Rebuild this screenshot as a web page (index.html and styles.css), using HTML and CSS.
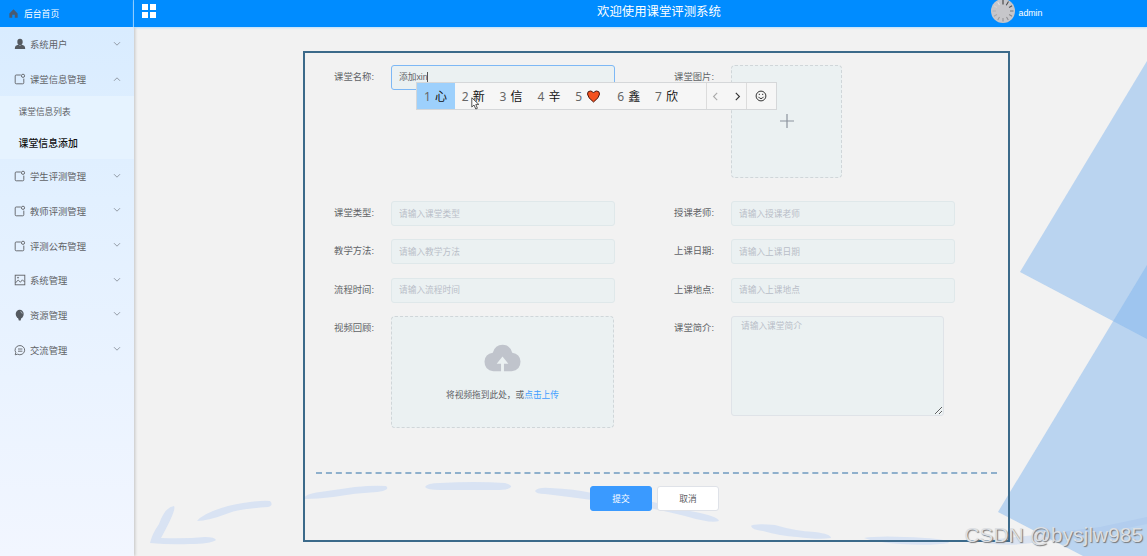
FILE: index.html
```
<!DOCTYPE html>
<html lang="zh-CN">
<head>
    <meta charset="UTF-8" />
    <title>欢迎使用课堂评测系统</title>
    <link rel="stylesheet" href="styles.css">
</head>
<body>

<!-- shared icons -->
<svg class="symbols" width="0" height="0">
    <symbol id="icon-down" viewBox="0 0 8 8"><path d="M1 2.2 L4 5.2 L7 2.2" /></symbol>
    <symbol id="icon-module" viewBox="0 0 12 12"><path d="M6.8 2 H2.2 Q1.2 2 1.2 3 V9.8 Q1.2 10.8 2.2 10.8 H8.8 Q9.8 10.8 9.8 9.8 V5.6" /><circle cx="9" cy="2.8" r="1.6" /></symbol>
</svg>

<div class="app">
    <aside class="sidebar">
        <div class="home">
            <svg class="home-icon" viewBox="0 0 10 10"><path d="M5 .4 L9.6 5 V9.6 H6.4 V6.4 H3.6 V9.6 H.4 V5 Z" /></svg>
            <span>后台首页</span>
        </div>
        <ul class="menu">
            <li class="menu-item">
                <svg class="icon solid" viewBox="0 0 12 12"><ellipse cx="6" cy="3.9" rx="2.7" ry="3.1" /><path d="M4.6 6.4 L6 7.8 L7.4 6.4 L10.2 7.8 Q11.2 8.6 11.2 11 H.8 Q.8 8.6 1.8 7.8 Z" /></svg>
                <span>系统用户</span>
                <svg class="arrow"><use href="#icon-down" /></svg>
            </li>
            <li class="menu-item">
                <svg class="icon"><use href="#icon-module" /></svg>
                <span>课堂信息管理</span>
                <svg class="arrow open"><use href="#icon-down" /></svg>
            </li>
            <li>
                <ul class="submenu">
                    <li>课堂信息列表</li>
                    <li class="active">课堂信息添加</li>
                </ul>
            </li>
            <li class="menu-item">
                <svg class="icon"><use href="#icon-module" /></svg>
                <span>学生评测管理</span>
                <svg class="arrow"><use href="#icon-down" /></svg>
            </li>
            <li class="menu-item">
                <svg class="icon"><use href="#icon-module" /></svg>
                <span>教师评测管理</span>
                <svg class="arrow"><use href="#icon-down" /></svg>
            </li>
            <li class="menu-item">
                <svg class="icon"><use href="#icon-module" /></svg>
                <span>评测公布管理</span>
                <svg class="arrow"><use href="#icon-down" /></svg>
            </li>
            <li class="menu-item">
                <svg class="icon" viewBox="0 0 12 12"><rect x="1.2" y="1.2" width="9.6" height="9.6" /><path d="M1.4 9 L4.2 6 L6.4 8.2 L8.4 5.8 L10.6 8" /><circle cx="4" cy="3.7" r=".5" /></svg>
                <span>系统管理</span>
                <svg class="arrow"><use href="#icon-down" /></svg>
            </li>
            <li class="menu-item">
                <svg class="icon solid" viewBox="0 0 12 12"><ellipse cx="5.7" cy="5.1" rx="4" ry="4.4" /><path d="M4 8.5 H7.4 L6.6 11.4 H4.8 Z" /><path class="shine" d="M6.4 2.6 Q8 3 8.2 4.6" /></svg>
                <span>资源管理</span>
                <svg class="arrow"><use href="#icon-down" /></svg>
            </li>
            <li class="menu-item">
                <svg class="icon" viewBox="0 0 12 12"><path d="M1.2 10.8 L1.8 8.6 A4.8 4.6 0 1 1 3.6 10.2 Z" /><path d="M4 5 H8.4 M4 7.2 H8.4" /></svg>
                <span>交流管理</span>
                <svg class="arrow"><use href="#icon-down" /></svg>
            </li>
        </ul>
    </aside>

    <div class="page">
        <header class="topbar">
            <svg class="grid-icon" viewBox="0 0 14 14"><path d="M0 0h6v6H0zM8 0h6v6H8zM0 8h6v6H0zM8 8h6v6H8z" /></svg>
            <h1>欢迎使用课堂评测系统</h1>
            <div class="user">
                <svg class="avatar" viewBox="0 0 24 24">
                    <circle cx="12" cy="12" r="12" />
                    <g>
                        <path d="M12 1 V5.5" stroke="#333" />
                        <path d="M12 1 V5.5" stroke="#444" transform="rotate(30 12 12)" />
                        <path d="M12 1.5 V5" stroke="#555" transform="rotate(60 12 12)" />
                        <path d="M12 1.5 V5" stroke="#777" transform="rotate(90 12 12)" />
                        <path d="M12 1.5 V5" stroke="#888" transform="rotate(120 12 12)" />
                        <path d="M12 1.5 V5" stroke="#8c8c90" transform="rotate(150 12 12)" />
                        <path d="M12 1.5 V5" stroke="#909094" transform="rotate(180 12 12)" />
                        <path d="M12 1.5 V5" stroke="#999" transform="rotate(210 12 12)" />
                        <path d="M12 1.5 V5" stroke="#a6a6aa" transform="rotate(240 12 12)" />
                        <path d="M12 1.5 V5" stroke="#b0b0b4" transform="rotate(270 12 12)" />
                        <path d="M12 1.5 V5" stroke="#d4d4d6" transform="rotate(300 12 12)" />
                        <path d="M12 1.5 V5" stroke="#e2e2e4" transform="rotate(330 12 12)" />
                    </g>
                </svg>
                <span>admin</span>
            </div>
        </header>

        <main class="content">
            <svg class="backdrop" viewBox="134 27 1013 529">
                <g class="sheets">
                    <path d="M1147 61 L1020 272 L1147 339 Z" />
                    <path d="M1147 265 L998 512 L1083 556 H1147 Z" />
                </g>
                <g class="strokes">
                    <path d="M150 543 Q152 534 159 524 Q165 507 174 506 Q177 509 161 538 Q185 539 205 537 Q215 537 216 540 Q210 544 190 544 Q170 545 150 543 Z" />
                    <path d="M197 521 Q203 513 228 506 Q255 500 270 501 Q274 505 268 507 Q238 509 229 513 Q208 521 197 521 Z" />
                    <path d="M304 499 Q304 494 320 492 L355 487 Q375 485 386 486 Q391 490 377 492 Q355 493 333 497 Q318 499 304 499 Z" />
                    <path d="M425 487 Q427 483 440 483 Q475 481 505 483 Q512 485 511 487 Q508 490 499 490 H440 Q427 490 425 487 Z" />
                    <path d="M535 491 Q538 487 550 488 Q575 489 592 493 V500 Q570 497 545 494 Q536 494 535 491 Z" />
                    <path d="M640 499 Q670 506 690 511 Q718 516 719 521 Q712 524 685 516 Q665 511 640 506 Z" />
                    <path d="M751 526 Q753 523 775 525 Q795 531 815 532 Q831 534 831 538 Q820 540 797 537 Q780 536 763 531 Q752 530 751 526 Z" />
                    <path d="M864 538 Q880 535 925 538 Q947 539 949 543 Q930 546 900 544 Q875 542 864 538 Z" />
                </g>
                <path class="tail" d="M980 541 Q1055 533 1100 527 L1147 517 V524 Q1090 536 1040 542 Q1000 548 980 541 Z" />
            </svg>

            <form class="panel">
                <div class="fields">
                    <div class="field">
                        <label>课堂名称:</label>
                        <div class="control">
                            <div class="input focus">添加xin<i class="caret"></i></div>
                            <!-- candidate window of the input method -->
                            <div class="ime">
                                <div class="cand on"><b>1</b>心</div>
                                <div class="cand"><b>2</b>新</div>
                                <div class="cand"><b>3</b>信</div>
                                <div class="cand"><b>4</b>辛</div>
                                <div class="cand wide"><b>5</b><svg class="heart" viewBox="0 0 14 13"><path d="M7 12 Q1 7.5 1 4 Q1 1 3.8 1 Q6 1 7 3 Q8 1 10.2 1 Q13 1 13 4 Q13 7.5 7 12 Z" /></svg></div>
                                <div class="cand"><b>6</b>鑫</div>
                                <div class="cand last"><b>7</b>欣</div>
                                <div class="pager">
                                    <svg class="off" viewBox="0 0 8 8"><path d="M5.5 .8 L2.3 4 L5.5 7.2" /></svg>
                                    <svg viewBox="0 0 8 8"><path d="M2.5 .8 L5.7 4 L2.5 7.2" /></svg>
                                </div>
                                <div class="emoji">
                                    <svg viewBox="0 0 12 12"><circle cx="6" cy="6" r="4.9" /><path d="M3.4 6.8 Q6 10.4 8.6 6.8 M4.3 3.8 V5 M7.7 3.8 V5" /></svg>
                                </div>
                                <svg class="pointer" viewBox="0 0 9 13"><path d="M.8 .8 V10 L3 8 L4.8 12 L6.4 11.3 L4.8 7.4 H7.8 Z" /></svg>
                            </div>
                        </div>
                    </div>
                    <div class="field">
                        <label>课堂图片:</label>
                        <div class="picture">
                            <svg viewBox="0 0 14 14"><path d="M7 0 V14 M0 7 H14" /></svg>
                        </div>
                    </div>
                    <div class="field">
                        <label>课堂类型:</label>
                        <input class="input" placeholder="请输入课堂类型">
                    </div>
                    <div class="field">
                        <label>授课老师:</label>
                        <input class="input" placeholder="请输入授课老师">
                    </div>
                    <div class="field">
                        <label>教学方法:</label>
                        <input class="input" placeholder="请输入教学方法">
                    </div>
                    <div class="field">
                        <label>上课日期:</label>
                        <input class="input" placeholder="请输入上课日期">
                    </div>
                    <div class="field">
                        <label>流程时间:</label>
                        <input class="input" placeholder="请输入流程时间">
                    </div>
                    <div class="field">
                        <label>上课地点:</label>
                        <input class="input" placeholder="请输入上课地点">
                    </div>
                    <div class="field">
                        <label>视频回顾:</label>
                        <div class="video">
                            <svg viewBox="0 0 38 28"><path d="M9.5 27.5 Q.5 26.5 .5 17.5 Q1 9.5 9 8.5 Q11.5 .5 19 .5 Q26.5 .5 29 8.5 Q37 9.5 37.5 17.5 Q37.5 26.5 28.5 27.5 H20.5 V20 H25 L19 12.5 L13 20 H17.5 V27.5 Z" /></svg>
                            <p>将视频拖到此处，或<em>点击上传</em></p>
                        </div>
                    </div>
                    <div class="field">
                        <label>课堂简介:</label>
                        <textarea class="intro" placeholder="请输入课堂简介"></textarea>
                    </div>
                </div>
                <div class="actions">
                    <button type="button" class="btn primary">提交</button>
                    <button type="button" class="btn">取消</button>
                </div>
            </form>
            <div class="watermark">CSDN @bysjlw985</div>
        </main>
    </div>
</div>

</body>
</html>
```
FILE: styles.css
```
* {
    box-sizing: border-box;
}

body {
    margin: 0;
    font-family: "Liberation Sans", "Noto Sans CJK SC", sans-serif;
    font-size: 9.33px;
    color: #606266;
    background: #f2f2f2;
}

ul {
    list-style: none;
    margin: 0;
    padding: 0;
}

svg {
    display: block;
    flex: none;
}

.symbols {
    display: none;
}

.app {
    display: flex;
    height: 556px;
    overflow: hidden;
}

/* sidebar */
.sidebar {
    width: 134px;
    flex: none;
    background: linear-gradient(#d9ecff 27px, #e2f0ff 200px, #f2f6ff);
    box-shadow: 1px 0 3px rgba(0, 0, 0, 0.2);
    z-index: 1;
}

.home {
    display: flex;
    align-items: center;
    gap: 6px;
    height: 27px;
    padding: 0 0 0 9px;
    background: #008cff;
    border-right: 1px solid #7cc4ff;
    color: #fff;
    font-size: 8.8px;
}

.home-icon {
    width: 9px;
    height: 9px;
    fill: #4a5a70;
}

.menu-item {
    display: flex;
    align-items: center;
    height: 34.7px;
    padding: 0 13px 0 14px;
}

.menu-item span {
    flex: 1;
    margin-left: 4px;
}

.icon {
    width: 12px;
    height: 12px;
    fill: none;
    stroke: #606266;
    stroke-width: 0.9;
}

.icon.solid {
    fill: #555a60;
    stroke: none;
}

.icon .shine {
    fill: none;
    stroke: #cfd8e2;
    stroke-width: 0.7;
}

.arrow {
    width: 8px;
    height: 8px;
    margin-top: -1px;
    fill: none;
    stroke: #8a929c;
    stroke-width: 0.9;
}

.arrow.open {
    transform: rotate(180deg);
}

.submenu {
    height: 62.5px;
    padding-top: 1px;
    background: #e6f3ff;
    font-size: 8.7px;
}

.submenu li {
    height: 30.7px;
    line-height: 31px;
    padding-left: 18.5px;
}

.submenu .active {
    font-size: 9.9px;
    font-weight: 500;
    color: #111;
}

/* top bar */
.page {
    flex: 1;
    display: flex;
    flex-direction: column;
}

.topbar {
    display: grid;
    grid-template-columns: 463px 393.5px 1fr;
    height: 27px;
    background: #008cff;
    color: #fff;
    box-shadow: 0 1px 2px #b8defc;
    z-index: 1;
}

.grid-icon {
    width: 14px;
    height: 14px;
    margin: 4px 0 0 8px;
    fill: #fff;
}

.topbar h1 {
    margin: 0;
    font-size: 12.4px;
    font-weight: 400;
    line-height: 24px;
}

.user {
    display: flex;
    align-items: center;
    gap: 4px;
    height: 24px;
    font-size: 8.8px;
}

.user span {
    padding-top: 2px;
}

.avatar {
    width: 24px;
    height: 24px;
    margin-top: -2px;
    fill: #c6c6ca;
}

/* content */
.content {
    flex: 1;
    position: relative;
    padding: 24px 0 0 169px;
}

.backdrop {
    position: absolute;
    left: 0;
    top: 0;
    width: 1013px;
    height: 529px;
}

.sheets {
    fill: rgba(130, 181, 238, 0.5);
}

.strokes {
    fill: #d9e3f3;
}

.tail {
    fill: rgba(160, 190, 235, 0.3);
}

.panel {
    position: relative;
    width: 707px;
    height: 491px;
    padding: 12px 11px;
    border: 2px solid #3c6a8a;
}

.fields {
    display: grid;
    grid-template-columns: 340px 340px;
    grid-template-rows: 136px 38.4px 38.4px 38.2px 157px;
    width: 681px;
    height: 409px;
    border-bottom: 2px dashed #8fb0cc;
}

.field {
    display: flex;
    align-items: flex-start;
}

.field label {
    width: 75px;
    padding-right: 17px;
    line-height: 24px;
    text-align: right;
    white-space: nowrap;
}

.control {
    position: relative;
}

.input {
    width: 224px;
    height: 25px;
    padding: 0 7px;
    border: 1px solid #dfe8ea;
    border-radius: 3px;
    background: #ebf1f2;
    color: #606266;
    font: 8.7px/23px "Liberation Sans", "Noto Sans CJK SC", sans-serif;
    outline: none;
}

.input.focus {
    border-color: #7db8f5;
}

.input::placeholder,
.intro::placeholder {
    color: #b9bec8;
}

.caret {
    display: inline-block;
    width: 1px;
    height: 10px;
    background: #555;
    vertical-align: -2px;
}

.picture,
.video {
    border: 1px dashed #d0d6d9;
    border-radius: 4px;
    background: #ebf1f2;
}

.picture {
    display: flex;
    align-items: center;
    justify-content: center;
    width: 111px;
    height: 113px;
    padding-bottom: 1px;
}

.picture svg {
    width: 14px;
    height: 14px;
    stroke: #8c939d;
    stroke-width: 1.2;
}

.video {
    display: flex;
    flex-direction: column;
    align-items: center;
    width: 223px;
    height: 112px;
    padding-top: 27px;
}

.video svg {
    width: 37px;
    height: 28px;
    fill: #c0c4cc;
}

.video p {
    margin: 16px 0 0;
    font-size: 8.7px;
    line-height: 14px;
}

.video em {
    color: #409eff;
    font-style: normal;
}

.intro {
    width: 213px;
    height: 100px;
    padding: 3px 9px;
    border: 1px solid #dfe3e8;
    border-radius: 3px;
    background: #ebf1f2;
    font: 8.7px/13px "Liberation Sans", "Noto Sans CJK SC", sans-serif;
}

.actions {
    display: flex;
    gap: 5px;
    padding: 12px 0 0 274px;
}

.btn {
    width: 62px;
    height: 25px;
    padding: 0;
    border: 1px solid #dfe2e8;
    border-radius: 3px;
    background: #fff;
    color: #606266;
    font: 8.7px "Liberation Sans", "Noto Sans CJK SC", sans-serif;
}

.btn.primary {
    background: #3a9aff;
    border-color: #3a9aff;
    color: #fff;
}

/* input method window */
.ime {
    position: absolute;
    left: 25px;
    top: 17px;
    z-index: 2;
    display: flex;
    width: 361px;
    height: 28px;
    border: 1px solid #d5d7d9;
    background: #f6f6f6;
    color: #111;
    font-size: 12px;
    line-height: 27px;
}

.cand {
    width: 37.8px;
    padding-left: 7px;
    white-space: nowrap;
}

.cand b {
    display: inline-block;
    width: 11px;
    font-family: "Noto Sans", sans-serif;
    font-weight: 400;
    color: #666;
}

.cand.on {
    background: #9dd0fc;
}

.cand.wide {
    display: flex;
    align-items: center;
    width: 42px;
}

.cand.last {
    width: 58px;
}

.heart {
    width: 15px;
    height: 13px;
    fill: #f4511e;
    stroke: #4a1a12;
    stroke-width: 1;
}

.pager {
    display: flex;
    align-items: center;
    justify-content: space-between;
    width: 41px;
    padding: 0 4px;
    border-left: 1px solid #dcdcdc;
    border-right: 1px solid #dcdcdc;
}

.pager svg {
    width: 9px;
    height: 9px;
    fill: none;
    stroke: #333;
}

.pager .off {
    stroke: #aaa;
}

.emoji {
    flex: 1;
    display: flex;
    align-items: center;
    justify-content: center;
}

.emoji svg {
    width: 12px;
    height: 12px;
    fill: none;
    stroke: #333;
}

.pointer {
    position: absolute;
    left: 54px;
    top: 14px;
    width: 9px;
    height: 13px;
    fill: #fff;
    stroke: #444;
    stroke-width: 0.9;
}

.watermark {
    position: absolute;
    right: 4px;
    bottom: 9px;
    font-size: 21px;
    line-height: 24px;
    color: #dcdfe3;
    text-shadow: 1px 1px 1px #777;
}
```
